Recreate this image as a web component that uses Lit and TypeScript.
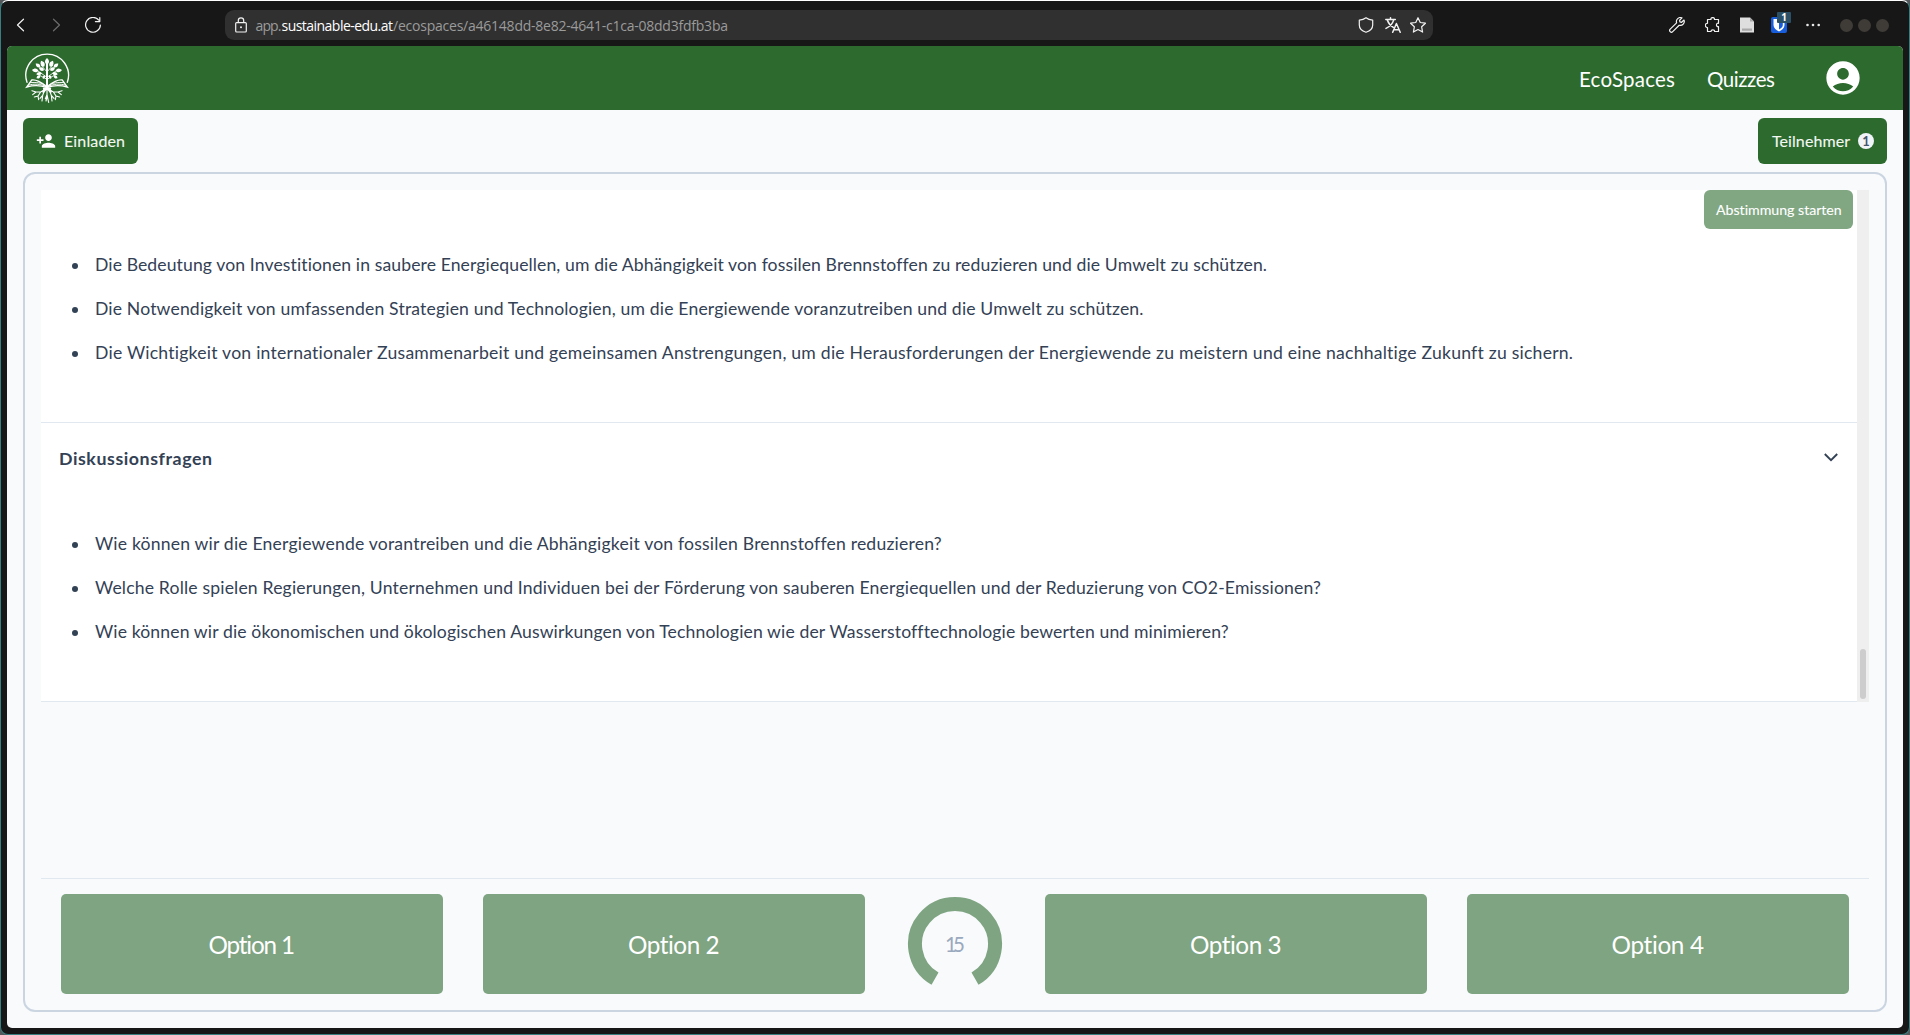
import { LitElement, html, css, svg } from "lit";
import { customElement, property, state } from "lit/decorators.js";

/** Single line of text tracked so that it fills a given width. */
@customElement("fit-text")
export class FitText extends LitElement {
  @property({ type: Number }) width = 0;
  @property() text = "";
  @state() private spacing = 0;

  static styles = css`
    :host { display: inline-block; white-space: nowrap; }
    .box { display: block; overflow: visible; }
    .run { display: inline-block; white-space: nowrap; }
  `;

  async firstUpdated() {
    await document.fonts.ready;
    const run = this.renderRoot.querySelector(".run") as HTMLElement;
    const natural = run.getBoundingClientRect().width;
    this.spacing = (this.width - natural) / Math.max(1, this.text.length - 1);
  }

  render() {
    return html`<span class="box" style="width:${this.width}px"
      ><span class="run" style="letter-spacing:${this.spacing}px">${this.text}</span></span>`;
  }
}

const leaf = (x: number, y: number, r: number, s = 1) =>
  svg`<path transform="translate(${x} ${y}) rotate(${r}) scale(${s})" d="M0 0C-8-5-8-13 0-20C8-13 8-5 0 0Z" />`;

@customElement("browser-bar")
export class BrowserBar extends LitElement {
  static styles = css`
    :host { display: block; }
    .bar { display: flex; align-items: center; height: 45px; box-sizing: border-box; padding: 3px 0 0 12px; color: #f2f2f2; }
    svg { display: block; flex: none; }
    .ln { fill: none; stroke: currentColor; stroke-width: 1.2; stroke-linejoin: round; stroke-linecap: round; }
    .bold { stroke-width: 1.5; }
    .fwd { color: #6c6c6c; }
    .navs { display: flex; gap: 20px; }
    .url { margin-left: 124px; width: 1208px; height: 30px; box-sizing: border-box; border-radius: 9px; background: #303030; display: flex; align-items: center; padding: 0 7px 0 10px; flex: none; }
    .addr { margin-left: 8.5px; display: flex; flex: 1; font: 14px/20px "Open Sans", "Noto Sans", sans-serif; color: #9b9b9b; padding-top: 2px; }
    .host { color: #fff; }
    .tr { margin: 0 9px 0 11px; }
    .ext { display: flex; align-items: center; margin-left: 236px; }
    .puz { margin-left: 20px; }
    .doc { margin-left: 19px; }
    .vault { margin-left: 17px; position: relative; }
    .count { position: absolute; left: 6px; top: -5px; width: 14px; height: 11px; border-radius: 1px; background: #2c5166; color: #fff; font: bold 10px/11px "Open Sans", sans-serif; text-align: center; }
    .more { margin-left: 18px; }
    .win { margin-left: 19px; }
  `;

  render() {
    return html`<div class="bar">
      <div class="navs">
        <svg width="16" height="16" viewBox="0 0 16 16"><path class="ln" d="M10.5 2.2 4.5 8l6 5.8" /></svg>
        <svg class="fwd" width="16" height="16" viewBox="0 0 16 16"><path class="ln" d="M4.5 2.2 10.5 8l-6 5.8" /></svg>
        <svg width="16" height="16" viewBox="0 0 16 16"><path class="ln" d="M13.8 3.2A7.4 7.4 0 1 0 15.4 8M14.8.6v4h-4.4" /></svg>
      </div>
      <div class="url">
        <svg width="12" height="16" viewBox="0 0 12 16"><path class="ln" d="M1.6 5.6h8.8q.9 0 .9.9v7.6q0 .9-.9.9H1.600q-.9 0-.9-.9V6.500q0-.9.900-.9ZM3.300 5.500V3.500a2.700 2.700 0 0 1 5.400 0v2" /><circle cx="6" cy="10.200" r="1" fill="#f2f2f2" /></svg>
        <span class="addr"
          ><fit-text width="26" text="app."></fit-text
          ><fit-text class="host" width="111.5" text="sustainable-edu.at"></fit-text
          ><fit-text width="335" text="/ecospaces/a46148dd-8e82-4641-c1ca-08dd3fdfb3ba"></fit-text
        ></span>
        <svg width="16" height="16" viewBox="0 0 16 16"><path class="ln" d="M8 .8C6.300 2.200 4 3 1.300 3.100V8c0 3.600 2.600 6 6.700 7.300C12.100 14 14.700 11.600 14.700 8V3.100C12 3 9.700 2.200 8 .8Z" /></svg>
        <svg class="tr" width="16" height="16" viewBox="0 0 16 16"><path class="ln bold" d="M.8 2.400h9.500M5.500.8v1.600M2.300 2.900c1 3 3.200 5.700 6 7.400M8.700 2.900C7.700 6.500 5 9.600 1 11.400M7.700 15.300l3.700-8.800 3.800 8.800M9 12.700h4.900" /></svg>
        <svg width="16" height="16" viewBox="0 0 16 16"><path class="ln" d="m8 .7 2.250 4.800 5.200.7-3.800 3.600.95 5.300L8 12.500l-4.600 2.600.95-5.300L.55 6.200l5.200-.7Z" /></svg>
      </div>
      <div class="ext">
        <svg width="16" height="16" viewBox="0 0 16 16"><path class="ln" d="M13 .9a4 4 0 0 0-5.400 4.900L1.200 12.200a1.700 1.700 0 0 0 2.500 2.500L10.200 8.300A4 4 0 0 0 15 3L12.600 5.300 10.900 4.900 10.600 3.200Z" /></svg>
        <svg class="puz" width="16" height="16" viewBox="0 0 16 16"><path class="ln" d="M2.500 2.500h3.500c-.7-2.600 4.100-2.600 3.400 0H13.500v3.800c-2.700-.7-2.700 3.900 0 3.300V14.500H9.600c.4-2.300-3.900-2.300-3.500 0H2.500V10.500C-.3 11-.3 5.700 2.500 6.300Z" /></svg>
        <svg class="doc" width="14" height="16" viewBox="0 0 14 16"><path fill="#dedede" d="M0 .5h10l4 4v11H0Z" /><path fill="#a9a9a9" d="M10 .5v4h4ZM2 11.500h10v2.200H2Z" /></svg>
        <div class="vault">
          <svg width="16" height="16" viewBox="0 0 16 16"><rect width="16" height="16" rx="2" fill="#175ddc" /><path fill="#fff" d="M2.500 2h11v6c0 3-2.300 4.900-5.500 6.500C4.800 12.900 2.500 11 2.500 8Z" /><path fill="#175ddc" d="M8 3.500h3.800V8c0 2-1.500 3.400-3.800 4.500Z" /></svg>
          <span class="count">1</span>
        </div>
        <svg class="more" width="16" height="4" viewBox="0 0 16 4"><g fill="#e8e8e8"><circle cx="2.500" cy="2" r="1.300" /><circle cx="8" cy="2" r="1.300" /><circle cx="13.700" cy="2" r="1.300" /></g></svg>
        <svg class="win" width="50" height="14" viewBox="0 0 50 14"><g fill="#3f3c38"><circle cx="6.500" cy="7.500" r="6.500" /><circle cx="24.500" cy="7.500" r="6.500" /><circle cx="42.500" cy="7.500" r="6.500" /></g></svg>
      </div>
    </div>`;
  }
}

@customElement("tree-logo")
export class TreeLogo extends LitElement {
  static styles = css`
    :host { display: block; }
    .mark { display: block; }
    .st { fill: none; stroke: #fff; stroke-linecap: round; }
  `;

  render() {
    return html`<svg class="mark" width="48" height="52" viewBox="69 156 144 156">
      <g class="st">
        <path stroke-width="4" d="M81 247A64 64 0 1 1 202 247" />
        <path stroke-width="6" d="M141 192V268" />
        <path stroke-width="2.500" d="M141 232 114 213M141 232 168 213M141 216 124 196M141 216 158 196M141 238 119 226M141 238 163 226" />
        <path stroke-width="4" d="M139 260C126 246 106 238 95 240L80 261C98 256 122 256 139 262M143 260C156 246 176 238 187 240L202 261C184 256 160 256 143 262" />
        <path stroke-width="2.800" d="M139 257C124 248 106 246 91 248M139 260C122 251 102 251 86 255M143 257C158 248 176 246 191 248M143 260C160 251 180 251 196 255" />
        <path stroke-width="7" d="M132 266H150M138 267 130 275M144 267 152 275" />
        <path stroke-width="3.400" d="M141 266V284L136 296M141 284 146 307M136 268 122 276 108 276 96 272M108 276 98 284M122 276 114 288 103 291M114 288 116 299M133 273 128 286 126 303M128 286 120 295M146 268 160 276 174 276 186 272M174 276 184 284M160 276 168 288 179 291M168 288 166 299M149 273 154 286 156 303M154 286 162 295M141 290 138 303" />
      </g>
      <g fill="#fff">
        ${leaf(141, 194, 0)}${leaf(132, 200, -26)}${leaf(150, 200, 26)}
        ${leaf(121, 202, -50, 0.9)}${leaf(161, 202, 50, 0.9)}
        ${leaf(115, 212, -84, 0.95)}${leaf(167, 212, 84, 0.95)}
        ${leaf(132, 211, -62, 0.85)}${leaf(150, 211, 62, 0.85)}
        ${leaf(125, 219, -104, 0.85)}${leaf(157, 219, 104, 0.85)}
        ${leaf(121, 227, -125, 0.7)}${leaf(161, 227, 125, 0.7)}
        ${leaf(134, 226, -155, 0.6)}${leaf(148, 226, 155, 0.6)}
      </g>
    </svg>`;
  }
}

interface Line { text: string; width: number; }

const LEARNINGS: Line[] = [
  { text: "Die Bedeutung von Investitionen in saubere Energiequellen, um die Abhängigkeit von fossilen Brennstoffen zu reduzieren und die Umwelt zu schützen.", width: 1172 },
  { text: "Die Notwendigkeit von umfassenden Strategien und Technologien, um die Energiewende voranzutreiben und die Umwelt zu schützen.", width: 1048.5 },
  { text: "Die Wichtigkeit von internationaler Zusammenarbeit und gemeinsamen Anstrengungen, um die Herausforderungen der Energiewende zu meistern und eine nachhaltige Zukunft zu sichern.", width: 1478.5 },
];

const QUESTIONS: Line[] = [
  { text: "Wie können wir die Energiewende vorantreiben und die Abhängigkeit von fossilen Brennstoffen reduzieren?", width: 846 },
  { text: "Welche Rolle spielen Regierungen, Unternehmen und Individuen bei der Förderung von sauberen Energiequellen und der Reduzierung von CO2-Emissionen?", width: 1226 },
  { text: "Wie können wir die ökonomischen und ökologischen Auswirkungen von Technologien wie der Wasserstofftechnologie bewerten und minimieren?", width: 1132.5 },
];

@customElement("app-root")
export class AppRoot extends LitElement {
  static styles = css`
    :host { display: block; width: 1910px; height: 1035px; overflow: hidden; background: #55585a; font-family: Lato, "Liberation Sans", sans-serif; }
    .window { box-sizing: border-box; height: 1035px; background: #171717; border: 1px solid #3a7f80; border-top-color: #fff; border-radius: 8px; display: flex; flex-direction: column; padding: 0 6px 6px; }
    .chrome { margin: 0 -6px; }
    .page { flex: 1; min-height: 0; border-radius: 5px; overflow: hidden; background: #f8fafc; display: flex; flex-direction: column; }
    .header { height: 64px; flex: none; background: #2c6a2e; display: flex; align-items: center; padding: 0 40px 0 16px; color: #fff; font-size: 20.5px; line-height: 24px; font-weight: 400; }
    .links { margin-left: auto; display: flex; gap: 32px; padding-top: 1px; }
    .user { display: block; margin-left: 48px; fill: #fff; }
    .tools { display: flex; justify-content: space-between; padding: 8px 16px; }
    .btn { display: flex; align-items: center; box-sizing: border-box; height: 46px; border-radius: 6px; background: #2c6a2e; color: #f4f8f4; font-size: 16px; line-height: 20px; -webkit-text-stroke: 0.1px #f4f8f4; }
    .invite { width: 115px; padding-left: 13px; gap: 8px; }
    .people { width: 129px; padding-left: 14px; gap: 8px; }
    .icon { display: block; fill: #fff; }
    .badge { width: 16px; height: 16px; border-radius: 8px; background: #f1f5f9; color: #475569; font-size: 13px; font-weight: 700; line-height: 16px; text-align: center; -webkit-text-stroke: 0; }
    .panel { box-sizing: border-box; height: 840px; margin: 0 16px; border: 2px solid #cbd5e1; border-radius: 12px; padding: 16px; display: flex; flex-direction: column; }
    .scroller { height: 512px; display: flex; position: relative; }
    .doc { flex: 1; background: #fff; border-bottom: 1px solid #e2e8f0; color: #334155; }
    .track { width: 12px; background: #efefef; display: flex; align-items: flex-end; justify-content: center; padding-bottom: 3px; box-sizing: border-box; }
    .thumb { width: 6px; height: 50px; border-radius: 3px; background: #cdcdcd; }
    .start { position: absolute; right: 16px; top: 0; width: 149px; height: 39px; box-sizing: border-box; border-radius: 6px; background: #80a682; color: #fff; font-size: 14.2px; line-height: 39px; padding-left: 12px; -webkit-text-stroke: 0.1px #fff; }
    .list { margin: 0; list-style: none; }
    .first { padding: 53px 0 47px 31px; border-bottom: 1px solid #e2e8f0; }
    .second { padding: 29px 0 0 31px; }
    .item { display: flex; align-items: center; height: 44px; gap: 17px; font-size: 17.6px; line-height: 44px; }
    .dot { width: 6px; height: 6px; border-radius: 3px; background: #334155; margin-top: 1px; }
    .head { height: 70px; display: flex; align-items: center; justify-content: space-between; padding: 0 19px 0 18px; font-size: 17.8px; font-weight: 700; line-height: 24px; }
    .chev { display: block; fill: none; stroke: #334155; stroke-width: 1.9; margin-bottom: 2px; }
    .options { margin-top: auto; height: 116px; box-sizing: border-box; border-top: 1px solid #e2e8f0; padding: 15px 20px 0; display: grid; grid-template-columns: 382px 382px 100px 382px 382px; column-gap: 40px; }
    .option { height: 100px; border-radius: 5px; background: #7ea481; color: #fff; display: flex; align-items: center; justify-content: center; font-size: 24.3px; line-height: 28px; padding-top: 1px; box-sizing: border-box; }
    .ring { height: 100px; display: grid; place-items: center; }
    .ring > * { grid-area: 1 / 1; }
    .arc { display: block; fill: none; stroke: #7ea481; stroke-width: 14; }
    .secs { color: #9aa9be; font-size: 20.5px; line-height: 24px; }
  `;

  private line(l: Line) {
    return html`<li class="item"><span class="dot"></span><fit-text width=${l.width} text=${l.text}></fit-text></li>`;
  }

  private option(n: number, width: number) {
    return html`<div class="option"><fit-text width=${width} text="Option ${n}"></fit-text></div>`;
  }

  render() {
    return html`<div class="window">
      <browser-bar class="chrome"></browser-bar>
      <main class="page">
        <header class="header">
          <tree-logo></tree-logo>
          <nav class="links">
            <fit-text width="96" text="EcoSpaces"></fit-text>
            <fit-text width="68" text="Quizzes"></fit-text>
          </nav>
          <svg class="user" width="40" height="40" viewBox="0 0 24 24"><path d="M12 2C6.480 2 2 6.480 2 12s4.480 10 10 10 10-4.480 10-10S17.520 2 12 2zm0 4c1.930 0 3.500 1.570 3.500 3.500S13.930 13 12 13s-3.500-1.570-3.500-3.500S10.070 6 12 6zm0 14c-2.030 0-4.430-.82-6.140-2.880C7.550 15.800 9.680 15 12 15s4.450.8 6.140 2.120C16.430 19.180 14.030 20 12 20z" /></svg>
        </header>
        <div class="tools">
          <div class="btn invite">
            <svg class="icon" width="20" height="20" viewBox="0 0 24 24"><path d="M15 12c2.210 0 4-1.790 4-4s-1.790-4-4-4-4 1.790-4 4 1.790 4 4 4zm-9-2V7H4v3H1v2h3v3h2v-3h3v-2H6zm9 4c-2.670 0-8 1.340-8 4v2h16v-2c0-2.660-5.330-4-8-4z" /></svg>
            <fit-text width="61" text="Einladen"></fit-text>
          </div>
          <div class="btn people">
            <fit-text width="78" text="Teilnehmer"></fit-text>
            <span class="badge">1</span>
          </div>
        </div>
        <section class="panel">
          <div class="scroller">
            <div class="doc">
              <ul class="list first">${LEARNINGS.map((l) => this.line(l))}</ul>
              <div class="head">
                <fit-text width="153" text="Diskussionsfragen"></fit-text>
                <svg class="chev" width="14" height="9" viewBox="0 0 14 9"><path d="M.8 1 7 7.200 13.200 1" /></svg>
              </div>
              <ul class="list second">${QUESTIONS.map((l) => this.line(l))}</ul>
            </div>
            <div class="track"><div class="thumb"></div></div>
            <div class="start"><fit-text width="126" text="Abstimmung starten"></fit-text></div>
          </div>
          <div class="options">
            ${this.option(1, 87)} ${this.option(2, 92)}
            <div class="ring">
              <svg class="arc" width="100" height="100" viewBox="0 0 100 100"><path d="M30 84.640A40 40 0 1 1 70 84.640" /></svg>
              <fit-text class="secs" width="20" text="15"></fit-text>
            </div>
            ${this.option(3, 92)} ${this.option(4, 93)}
          </div>
        </section>
      </main>
    </div>`;
  }
}
